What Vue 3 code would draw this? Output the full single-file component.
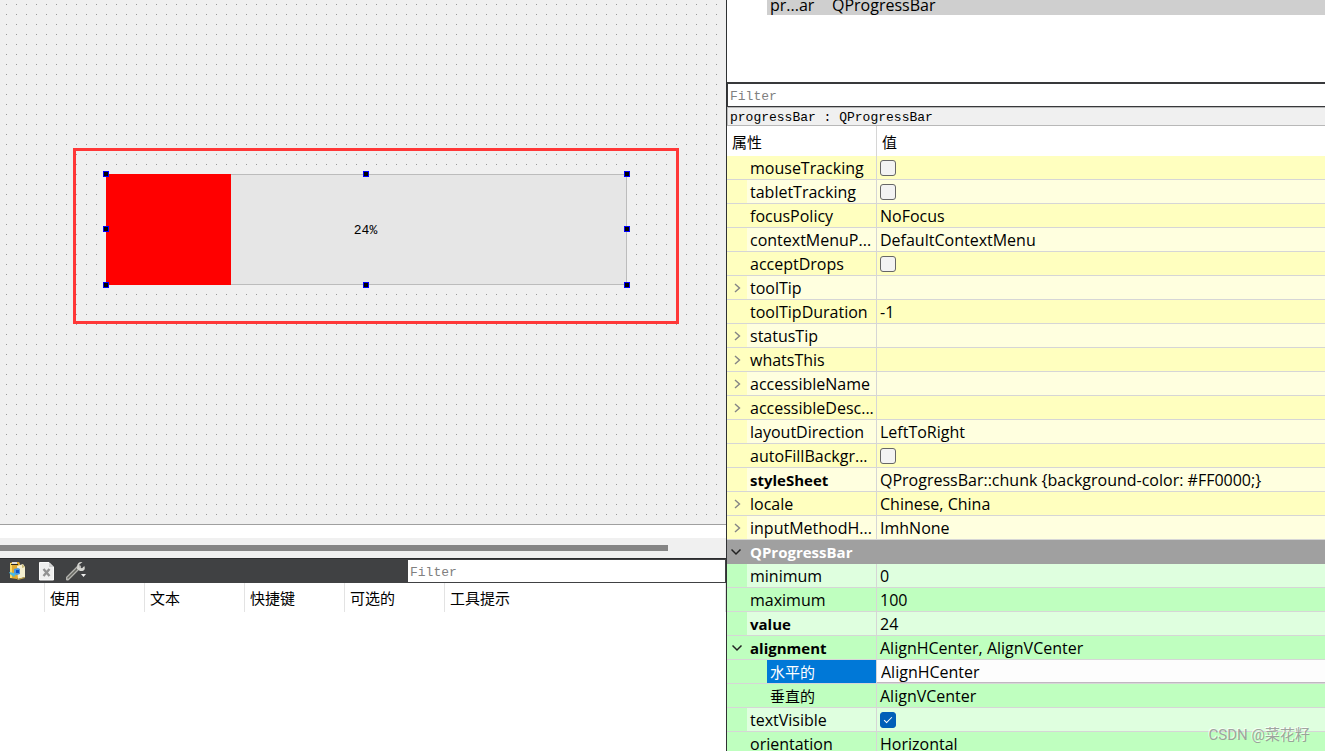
<script setup>
import { ref } from 'vue'

const handles = ['nw', 'n', 'ne', 'w', 'e', 'sw', 's', 'se']
const actionColumns = ['使用', '文本', '快捷键', '可选的', '工具提示']
const progress = ref(24)
const objectFilter = ref('')
const actionFilter = ref('')

const rows = ref([
  { name: 'mouseTracking', check: false, tone: 'y' },
  { name: 'tabletTracking', check: false, tone: 'y' },
  { name: 'focusPolicy', value: 'NoFocus', tone: 'y' },
  { name: 'contextMenuP...', value: 'DefaultContextMenu', tone: 'y' },
  { name: 'acceptDrops', check: false, tone: 'y' },
  { name: 'toolTip', arrow: 'right', tone: 'y' },
  { name: 'toolTipDuration', value: '-1', tone: 'y' },
  { name: 'statusTip', arrow: 'right', tone: 'y' },
  { name: 'whatsThis', arrow: 'right', tone: 'y' },
  { name: 'accessibleName', arrow: 'right', tone: 'y' },
  { name: 'accessibleDesc...', arrow: 'right', tone: 'y' },
  { name: 'layoutDirection', value: 'LeftToRight', tone: 'y' },
  { name: 'autoFillBackgr...', check: false, tone: 'y' },
  { name: 'styleSheet', value: 'QProgressBar::chunk {background-color: #FF0000;}', bold: true, tone: 'y' },
  { name: 'locale', value: 'Chinese, China', arrow: 'right', tone: 'y' },
  { name: 'inputMethodH...', value: 'ImhNone', arrow: 'right', tone: 'y' },
  { name: 'QProgressBar', group: true, arrow: 'down' },
  { name: 'minimum', value: '0', tone: 'g' },
  { name: 'maximum', value: '100', tone: 'g' },
  { name: 'value', value: '24', bold: true, tone: 'g' },
  { name: 'alignment', value: 'AlignHCenter, AlignVCenter', bold: true, arrow: 'down', tone: 'g' },
  { name: '水平的', value: 'AlignHCenter', child: true, editing: true, tone: 'g' },
  { name: '垂直的', value: 'AlignVCenter', child: true, tone: 'g' },
  { name: 'textVisible', check: true, tone: 'g' },
  { name: 'orientation', value: 'Horizontal', tone: 'g' }
])

const rowClass = (row, i) => [
  row.group ? 'group' : row.tone === 'y' ? 'yellow' : 'green',
  { light: !row.group && i % 2 === 1, bold: row.bold, child: row.child, editing: row.editing }
]
</script>

<template>
  <main class="designer">
    <section class="left">
      <div class="canvas">
        <div class="annotation"></div>
        <div class="widget">
          <div class="bar" role="progressbar" aria-label="progressBar" :aria-valuenow="progress" aria-valuemin="0" aria-valuemax="100">
            <div class="chunk" :style="{ width: progress + '%' }"></div>
            <span class="percent">{{ progress }}%</span>
          </div>
          <i v-for="h in handles" :key="h" class="handle" :class="h"></i>
        </div>
      </div>
      <div class="gap"></div>
      <div class="scroll"><div class="thumb"></div></div>
      <div class="toolbar">
        <button class="tool" type="button" aria-label="Paste action">
          <svg width="18" height="20" viewBox="0 0 18 20">
            <path d="M2 2l3-1h6l1 2v13l-3 2-7-1z" fill="#dfaa30" />
            <path d="M2 2h2v15H2z" fill="#f8d967" />
            <path d="M4 1h5v2H4z" fill="#dcdcdc" /><path d="M3 3h7v1H3z" fill="#2f2a1c" />
            <path d="M9 5l6-2 2 3v10l-7 2z" fill="#f5efcf" />
            <path d="M14 3l3 3-3 1z" fill="#c9b979" />
            <path d="M9 18l8-2v1l-7 2z" fill="#c5a64a" />
            <path d="M6 8l4-1 2 1v5l-3 1-3-1z" fill="#4a98e0" />
            <path d="M8 9h3v3H8z" fill="#0a4fc4" />
            <path d="M1 11l5 1 2 1-2 3-4-3z" fill="#49b9df" />
          </svg>
        </button>
        <button class="tool" type="button" aria-label="Delete action">
          <svg width="18" height="19" viewBox="0 0 18 19">
            <path d="M2.500.5h9.500l4.500 4.500v13h-14z" fill="#efefef" stroke="#fafafa" />
            <path d="M12 1v4h4.500z" fill="#cfcfcf" />
            <path d="M6.500 7l6 7M12.500 7l-6 7" stroke="#929292" stroke-width="2.400" fill="none" />
          </svg>
        </button>
        <button class="tool" type="button" aria-label="Configure actions">
          <svg width="23" height="20" viewBox="1 0 23 20">
            <path d="M2.500 17.500L14 6" stroke="#b4b4b0" stroke-width="4" stroke-linecap="round" />
            <path d="M3 17L13.500 6.500" stroke="#63645f" stroke-width="1.500" stroke-linecap="round" />
            <path d="M17.500 1c-3-.6-5.500 1-5.300 4.500L12 8l3 2c4 .6 5.700-1.500 4.300-5L17 7.200l-2.600-.8-.6-2.500z" fill="#d6d6d2" />
            <path d="M16 13h5l-2.500 3z" fill="#eee" />
          </svg>
        </button>
        <input v-model="actionFilter" class="filter" type="text" placeholder="Filter" aria-label="Filter actions" />
      </div>
      <div class="actions">
        <table class="action-table">
          <colgroup>
            <col class="c-icon" /><col class="c-col" /><col class="c-col" /><col class="c-col" /><col class="c-col" /><col />
          </colgroup>
          <thead>
            <tr><td></td><th v-for="c in actionColumns" :key="c" scope="col">{{ c }}</th></tr>
          </thead>
        </table>
      </div>
    </section>

    <section class="right">
      <div class="tree">
        <div class="tree-item"><span class="obj">pr...ar</span><span>QProgressBar</span></div>
      </div>
      <input v-model="objectFilter" class="filter prop-filter" type="text" placeholder="Filter" aria-label="Filter properties" />
      <div class="path">progressBar : QProgressBar</div>
      <table class="props">
        <colgroup><col class="c-name" /><col /></colgroup>
        <thead>
          <tr><th scope="col">属性</th><th scope="col">值</th></tr>
        </thead>
        <tbody>
          <tr v-for="(row, i) in rows" :key="row.name + i" :class="rowClass(row, i)">
            <th scope="row" :colspan="row.group ? 2 : 1">
              <div class="name">
                <span class="indent">
                  <svg v-if="row.arrow === 'right'" width="11" height="10" viewBox="0 0 11 10"><path d="M3 1l4.500 4L3 9" fill="none" stroke="#858585" stroke-width="1.400" /></svg>
                  <svg v-if="row.arrow === 'down'" width="11" height="8" viewBox="0 0 11 8"><path d="M.5 1.500l4.500 4.500 4.500-4.500" fill="none" stroke="#222" stroke-width="1.500" /></svg>
                </span>
                <span class="label">{{ row.name }}</span>
              </div>
            </th>
            <td v-if="!row.group">
              <input v-if="row.check !== undefined" v-model="row.check" type="checkbox" :aria-label="row.name" />
              <select v-else-if="row.editing" v-model="row.value" :aria-label="row.name">
                <option>AlignLeft</option><option>AlignHCenter</option><option>AlignRight</option><option>AlignJustify</option>
              </select>
              <div v-else class="value">{{ row.value }}</div>
            </td>
          </tr>
        </tbody>
      </table>
      <div class="watermark">CSDN @菜花籽</div>
    </section>
  </main>
</template>

<style>
body {
  margin: 0;
  overflow: hidden;
}
</style>

<style scoped>
.designer {
  display: grid;
  grid-template-columns: 727fr 598fr;
  height: 100vh;
  overflow: hidden;
  background: #fff;
  color: #000;
  font: 15px/24px "Open Sans", "Noto Sans CJK SC", sans-serif;
}
.left {
  display: flex;
  flex-direction: column;
  min-width: 0;
  border-right: 1px solid #2f3133;
}
.canvas {
  position: relative;
  box-sizing: border-box;
  height: 525px;
  overflow: hidden;
  border-bottom: 1px solid #a0a0a0;
  background: #f0f0f0 conic-gradient(from 0deg at 1px 1px, transparent 270deg, #999 0) 6px 4px / 10px 10px;
}
.annotation {
  position: absolute;
  box-sizing: border-box;
  left: 73px;
  top: 148px;
  width: 606px;
  height: 176px;
  border: 3px solid #ff3838;
}
.widget {
  position: absolute;
  left: 106px;
  top: 174px;
  width: 521px;
  height: 111px;
}
.bar {
  position: relative;
  box-sizing: border-box;
  display: flex;
  align-items: center;
  justify-content: center;
  height: 100%;
  border: 1px solid #bcbcbc;
  background: #e6e6e6;
}
.chunk {
  position: absolute;
  left: -1px;
  top: -1px;
  bottom: -1px;
  background: #f00;
}
.percent {
  position: relative;
  padding: 2px 2px 0 0;
  font: 13px/16px "Liberation Mono", monospace;
}
.handle {
  position: absolute;
  box-sizing: border-box;
  width: 6px;
  height: 6px;
  margin: -3px;
  border: 1px solid #00f;
  background: #000;
}
.nw, .w, .sw { left: 0; }
.n, .s { left: 260px; }
.ne, .e, .se { left: 100%; }
.nw, .n, .ne { top: 0; }
.w, .e { top: 55px; }
.sw, .s, .se { top: 100%; }
.gap {
  height: 13px;
}
.scroll {
  height: 20px;
  background: #f0f0f0;
}
.thumb {
  width: 92%;
  height: 6px;
  border-top: 7px solid #f0f0f0;
  background: #858585;
}
.toolbar {
  box-sizing: border-box;
  display: flex;
  align-items: center;
  height: 25px;
  padding: 1px 1px 1px 8px;
  border-top: 1px solid #2b2c2e;
  background: #404143;
}
.tool {
  display: flex;
  align-items: center;
  width: 29px;
  height: 22px;
  padding: 0;
  border: 0;
  background: none;
}
.filter {
  box-sizing: border-box;
  width: 317px;
  height: 22px;
  margin: 0 0 0 auto;
  padding: 2px 2px 0 2px;
  border: 0;
  border-radius: 0;
  outline: 0;
  background: #fff;
  font: 13px/20px "Liberation Mono", monospace;
}
.filter::placeholder {
  color: #808080;
  opacity: 1;
}
.actions {
  flex: 1;
  background: #fff;
}
table {
  width: 100%;
  table-layout: fixed;
  border-collapse: separate;
  border-spacing: 0;
}
th, td {
  box-sizing: border-box;
  padding: 0;
  font-weight: 400;
  text-align: left;
}
.c-icon { width: 45px; }
.c-col { width: 100px; }
.action-table th, .action-table td {
  height: 29px;
  padding: 0 5px 0 5px;
  border-right: 1px solid #e3e3e3;
}
.right {
  position: relative;
  min-width: 0;
  overflow: hidden;
  background: #fff;
}
.tree {
  display: flex;
  flex-direction: column;
  height: 82px;
}
.tree-item {
  display: flex;
  height: 15px;
  margin-left: 40px;
  padding-left: 3px;
  background: #cfcfcf;
  font-size: 16px;
  line-height: 10px;
}
.obj {
  width: 62px;
}
.prop-filter {
  display: block;
  width: 100%;
  height: 25px;
  margin: 0;
  border: 1px solid #38393b;
  border-top-width: 2px;
  border-right: 0;
}
.path {
  box-sizing: border-box;
  height: 19px;
  padding-left: 2px;
  border: 1px solid #b8b8b8;
  border-right: 0;
  background: #f0f0f0;
  font: 13px/20px "Liberation Mono", monospace;
}
.c-name { width: 150px; }
.props thead th {
  height: 30px;
  padding: 2px 5px 0 5px;
}
.props thead th:first-child,
tbody th {
  border-right: 1px solid #d6d6d6;
}
tbody th, tbody td {
  height: 24px;
  border-bottom: 1px solid #d6d6d6;
  font-size: 16px;
  line-height: 21px;
  white-space: nowrap;
}
tbody td {
  padding-left: 3px;
}
.name {
  display: flex;
  height: 23px;
}
.indent {
  box-sizing: border-box;
  display: flex;
  flex: none;
  align-items: center;
  width: 20px;
  padding-left: 5px;
}
.group .indent { padding-left: 4px; }
.value {
  padding-top: 2px;
}
.label {
  flex: 1;
  padding: 2px 0 0 3px;
}
.yellow, .yellow .indent { background: #ffffbf; }
.yellow.light { background: #ffffdf; }
.green, .green .indent { background: #bfffbf; }
.green.light { background: #dfffdf; }
.child .indent { width: 40px; }
.child .label { font-size: 15px; }
.bold .label, .group .label {
  font-size: 15px;
  font-weight: 700;
}
.group { background: #a0a0a0; color: #fff; }
.group th { border-right: 0; border-color: #a0a0a0; }
.editing .label { background: #0078d7; color: #fff; }
.editing td { padding: 0; }
select {
  display: block;
  box-sizing: border-box;
  width: 100%;
  height: 23px;
  margin: 0;
  padding: 2px 4px 0 4px;
  border: 0;
  border-bottom: 1px solid #c0b8c0;
  border-radius: 0;
  outline: 0;
  appearance: none;
  background: #fdfdfd;
  color: #000;
  font: inherit;
}
input[type="checkbox"] {
  display: block;
  box-sizing: border-box;
  width: 16px;
  height: 16px;
  margin: 0;
  border: 1px solid #666;
  border-radius: 3px;
  appearance: none;
  background: #f3f3f3;
}
input[type="checkbox"]:checked {
  border-color: #005fb8;
  background: #005fb8;
}
input[type="checkbox"]:checked::after {
  content: "";
  display: block;
  width: 7px;
  height: 3px;
  margin: 4px 0 0 3px;
  border: solid #fff;
  border-width: 0 0 1px 1px;
  transform: rotate(-45deg);
}
.watermark {
  position: absolute;
  right: 15px;
  bottom: 5px;
  color: #8c8c8ccc;
  font: 15px/22px Roboto, "Noto Sans CJK SC", sans-serif;
  text-shadow: -1px -1px 0 #ffffffb3;
}
</style>
